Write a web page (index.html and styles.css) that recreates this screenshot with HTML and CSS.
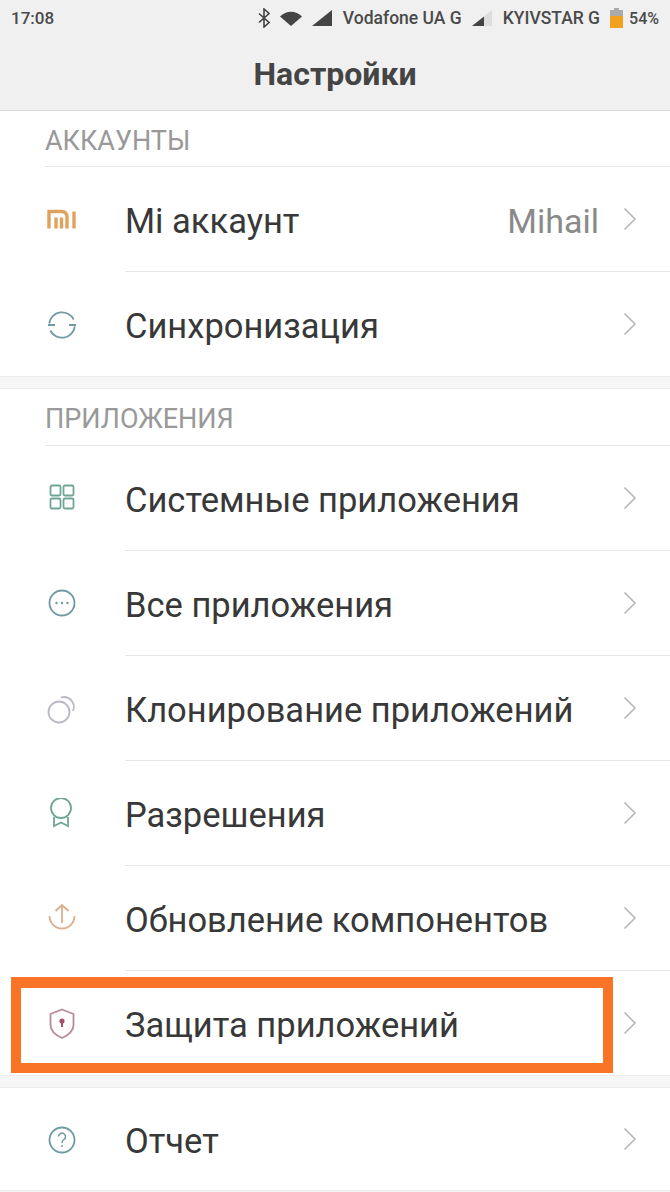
FILE: index.html
```html
<!DOCTYPE html>
<html lang="ru">
<head>
    <meta charset="UTF-8">
    <meta name="viewport" content="width=device-width, initial-scale=1.0">
    <title>Настройки</title>
    <link rel="stylesheet" href="styles.css">
</head>
<body>
    <header class="topbar">
        <div class="status">
            <span class="time">17:08</span>
            <div class="status-right">
                <svg class="st-bt" width="12" height="20" viewBox="0 0 12 20"><path d="M1 5.5l10 9-5 4.5V1l5 4.500-10 9" fill="none" stroke="#444" stroke-width="1.600"/></svg>
                <svg class="st-wifi" width="23" height="16" viewBox="0 0 23 16"><path d="M0 6.500C6 0 16 0 22 6.500L11 16z" fill="#444"/></svg>
                <svg class="st-signal" width="20" height="16" viewBox="0 0 20 16"><path d="M0 16L20 0v16z" fill="#444"/></svg>
                <span class="carrier">Vodafone UA G</span>
                <svg class="st-signal" width="20" height="16" viewBox="0 0 20 16"><path d="M0 16L20 0v16z" fill="#ddd"/><path d="M0 16l12-9.600V16z" fill="#444"/></svg>
                <span class="carrier">KYIVSTAR G</span>
                <svg class="st-batt" width="13" height="20" viewBox="0 0 13 20"><path d="M4 0h5v2h4v6H0V2h4z" fill="#aaa"/><path d="M0 8h13v12H0z" fill="#f2a11f"/></svg>
                <span class="percent">54%</span>
            </div>
        </div>
        <h1 class="title">Настройки</h1>
    </header>

    <section class="group">
        <h2 class="group-title"><span>АККАУНТЫ</span></h2>
        <div class="row">
            <svg class="icon" viewBox="0 0 32 32" fill="none" stroke="#e0a25f" stroke-width="3.400"><path d="M3 24.500v-17h13a5 5 0 0 1 5 5v12M10 13.500v11M15.500 13.500v11M28 7.500v17"/></svg>
            <div class="row-body"><span class="label">Mi аккаунт</span><span class="value">Mihail</span><svg class="chevron" viewBox="0 0 14 24"><path d="M1.500 1.500L12 12 1.500 22.500"/></svg></div>
        </div>
        <div class="row">
            <svg class="icon" viewBox="0 0 32 32" fill="none" stroke="#6f9aa3" stroke-width="1.800"><path d="M3.200 14.500a13 13 0 0 1 24.500-4M28.800 17.500a13 13 0 0 1-24.500 4M2 16h7M23 16h7"/></svg>
            <div class="row-body"><span class="label">Синхронизация</span><svg class="chevron" viewBox="0 0 14 24"><path d="M1.500 1.500L12 12 1.500 22.500"/></svg></div>
        </div>
    </section>

    <section class="group">
        <h2 class="group-title"><span>ПРИЛОЖЕНИЯ</span></h2>
        <div class="row">
            <svg class="icon" viewBox="0 0 32 32" fill="none" stroke="#6fa596" stroke-width="1.800"><rect x="4.500" y="2.500" width="10" height="10" rx="1.500"/><rect x="17.500" y="2.500" width="10" height="10" rx="1.500"/><rect x="4.500" y="15.500" width="10" height="10" rx="1.500"/><rect x="17.500" y="15.500" width="10" height="10" rx="1.500"/></svg>
            <div class="row-body"><span class="label">Системные приложения</span><svg class="chevron" viewBox="0 0 14 24"><path d="M1.500 1.500L12 12 1.500 22.500"/></svg></div>
        </div>
        <div class="row">
            <svg class="icon" viewBox="0 0 32 32" fill="none" stroke="#6f9aa3" stroke-width="1.800"><circle cx="16" cy="15" r="12.500"/><circle cx="10.500" cy="15" r="1.200" fill="#6f9aa3" stroke="none"/><circle cx="16" cy="15" r="1.200" fill="#6f9aa3" stroke="none"/><circle cx="21.500" cy="15" r="1.200" fill="#6f9aa3" stroke="none"/></svg>
            <div class="row-body"><span class="label">Все приложения</span><svg class="chevron" viewBox="0 0 14 24"><path d="M1.500 1.500L12 12 1.500 22.500"/></svg></div>
        </div>
        <div class="row">
            <svg class="icon" viewBox="0 0 32 32" fill="none" stroke="#bcb6c6" stroke-width="1.800"><circle cx="13" cy="19" r="10.500"/><path d="M15 4.500a10 10 0 0 1 12 13.500"/></svg>
            <div class="row-body"><span class="label">Клонирование приложений</span><svg class="chevron" viewBox="0 0 14 24"><path d="M1.500 1.500L12 12 1.500 22.500"/></svg></div>
        </div>
        <div class="row">
            <svg class="icon" viewBox="0 0 32 32" fill="none" stroke="#6fa596" stroke-width="1.800"><circle cx="15" cy="10" r="10"/><path d="M8 19v9l7-3.500 7 3.500v-9"/></svg>
            <div class="row-body"><span class="label">Разрешения</span><svg class="chevron" viewBox="0 0 14 24"><path d="M1.500 1.500L12 12 1.500 22.500"/></svg></div>
        </div>
        <div class="row">
            <svg class="icon" viewBox="0 0 32 32" fill="none" stroke="#dcaf8c" stroke-width="1.800"><path d="M3.500 13a12.500 12.500 0 0 0 25 0M16 20V2M9.500 8L16 2l6.500 6"/></svg>
            <div class="row-body"><span class="label">Обновление компонентов</span><svg class="chevron" viewBox="0 0 14 24"><path d="M1.500 1.500L12 12 1.500 22.500"/></svg></div>
        </div>
        <div class="row">
            <svg class="icon" viewBox="0 0 32 32" fill="none" stroke="#b98a9a" stroke-width="1.800"><path d="M16 1.500l11.500 4.500v11c0 5.500-5 10-11.500 13-6.500-3-11.500-7.500-11.500-13V6z"/><circle cx="16" cy="13" r="2.600" fill="#a8506f" stroke="none"/><path d="M16 13v6" stroke="#a8506f" stroke-width="2"/></svg>
            <div class="row-body"><span class="label">Защита приложений</span><svg class="chevron" viewBox="0 0 14 24"><path d="M1.500 1.500L12 12 1.500 22.500"/></svg></div>
            <div class="highlight"></div>
        </div>
    </section>

    <section class="group">
        <div class="row row-last">
            <svg class="icon" viewBox="0 0 32 32" fill="none" stroke="#6f9aa3" stroke-width="1.800"><circle cx="16" cy="16" r="12.500"/><path d="M12.500 12.500a3.500 3.500 0 1 1 5.500 3c-1.400 1-2 1.600-2 3.500" stroke-width="1.500"/><circle cx="16" cy="22" r="1" fill="#6f9aa3" stroke="none"/></svg>
            <div class="row-body"><span class="label">Отчет</span><svg class="chevron" viewBox="0 0 14 24"><path d="M1.500 1.500L12 12 1.500 22.500"/></svg></div>
        </div>
    </section>
</body>
</html>
```

FILE: styles.css
```css
body {
    margin: 0;
    height: 1192px;
    overflow: hidden;
    background: #f6f6f6;
    color: #333;
    font-family: Roboto, "Liberation Sans", sans-serif;
}

.topbar {
    height: 110px;
    background: #f0f0f0;
    border-bottom: 1px solid #d9d9d9;
}

.status {
    display: flex;
    justify-content: space-between;
    align-items: center;
    height: 36px;
    padding: 0 11px;
    font-size: 17.500px;
    font-weight: 500;
    color: #4a4a4a;
}

.time {
    font-size: 17px;
}

.status-right {
    display: flex;
    align-items: center;
}

.st-bt { margin-right: 10px; }
.st-wifi { margin-right: 9px; }
.st-signal { margin-right: 11px; }
.carrier { margin-right: 10px; }
.st-batt { margin-right: 6px; }
.percent { font-size: 16px; }

.title {
    margin: 0;
    padding-top: 5px;
    text-align: center;
    font-size: 32px;
    line-height: 66px;
    font-weight: 700;
    color: #444;
}

.group {
    background: #fff;
    border-bottom: 1px solid #ececec;
}

.group + .group {
    border-top: 1px solid #ececec;
    margin-top: 11px;
}

.group-title {
    margin: 0 0 0 45px;
    height: 57px;
    box-sizing: border-box;
    padding-top: 3px;
    display: flex;
    align-items: center;
    font-size: 27px;
    font-weight: 400;
    color: #999;
    border-bottom: 1px solid #e6e6e6;
}

.group:first-of-type .group-title {
    height: 56px;
    padding-top: 4px;
}

.row {
    position: relative;
    display: flex;
    height: 105px;
}

.icon {
    flex: none;
    width: 32px;
    height: 32px;
    margin: 37px 47px 0 46px;
}

.row-body {
    flex: 1;
    display: flex;
    align-items: center;
    padding: 3px 33px 0 0;
    box-sizing: border-box;
    border-bottom: 1px solid #e6e6e6;
}

.row:last-child {
    height: 104px;
}

.row:last-child .row-body {
    border-bottom: none;
}

.row-last,
.row-last:last-child {
    height: 102px;
}

.row-last .icon {
    margin-top: 36px;
}

.row-last .row-body {
    padding-top: 3px;
}

.label {
    flex: 1;
    font-size: 34.500px;
    color: #383838;
}

.value {
    font-size: 34px;
    color: #8a8a8a;
    margin-right: 24px;
}

.chevron {
    flex: none;
    width: 14px;
    height: 24px;
    margin-top: -4px;
    fill: none;
    stroke: #b5b5b5;
    stroke-width: 1.500;
}

.highlight {
    position: absolute;
    left: 11px;
    top: 6px;
    width: 602px;
    height: 96px;
    box-sizing: border-box;
    border: solid #f97426;
    border-width: 11px 10px 10px;
}
```
